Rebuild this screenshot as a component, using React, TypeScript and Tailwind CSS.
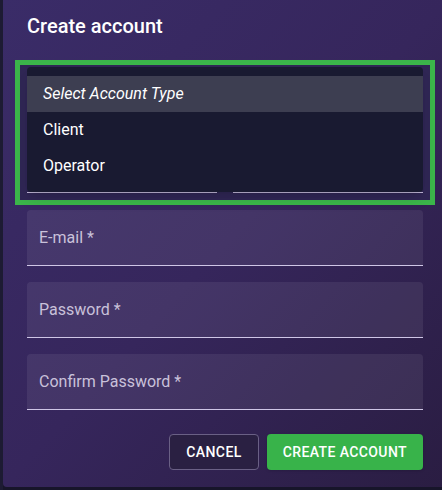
import { ReactNode } from "react";

function Field({ label }: { label: string }) {
  return (
    <div className="h-14 rounded-t bg-white/[0.07] border-b border-[#cfc6e6] flex items-center px-3">
      <span className="text-base text-[#c9c1da]">{label}</span>
    </div>
  );
}

function MenuItem({ children, active, italic }: { children: ReactNode; active?: boolean; italic?: boolean }) {
  return (
    <div
      className={
        "h-9 flex items-center px-4 text-base text-white " +
        (active ? "bg-[#3d3e51] " : "") +
        (italic ? "italic text-[#ececf2]" : "")
      }
    >
      {children}
    </div>
  );
}

export default function App() {
  return (
    <div
      className="w-[442px] h-[490px] overflow-hidden flex bg-[#17152a]"
      style={{ fontFamily: "Roboto, 'Liberation Sans', sans-serif" }}
    >
      <div className="w-[3px] shrink-0 h-full bg-[#1d1b33]" />
      <div className="w-[444px] shrink-0 h-[487px] rounded-bl bg-gradient-to-br from-[#3a2c68] via-[#36265c] to-[#2a1d42] px-6 pt-[10px] flex flex-col">
        <h2 className="text-xl font-medium leading-8 text-white">Create account</h2>

        <div className="mt-[18px] -mx-3 border-[5px] border-[#3bb54a] bg-[#2f2654] px-[7px] pb-[7px]">
          <div className="relative h-[128px]">
            <div className="absolute inset-x-0 bottom-0 grid grid-cols-2 gap-4">
              <div className="h-10 border-b border-[#bdb4d4]" />
              <div className="h-10 border-b border-[#bdb4d4]" />
            </div>
            <div className="absolute inset-x-0 top-[2px] h-[125px] rounded bg-[#191a31] pt-[9px] shadow-lg">
              <MenuItem active italic>
                Select Account Type
              </MenuItem>
              <MenuItem>Client</MenuItem>
              <MenuItem>Operator</MenuItem>
            </div>
          </div>
        </div>

        <div className="mt-[5px] flex flex-col gap-4 w-[396px]">
          <Field label="E-mail *" />
          <Field label="Password *" />
          <Field label="Confirm Password *" />
        </div>

        <div className="mt-6 w-[396px] flex justify-end gap-2">
          <button className="h-9 px-4 rounded border border-[#6a6085] bg-[#2a2042] text-sm font-medium tracking-[0.4px] text-white uppercase">
            Cancel
          </button>
          <button className="h-9 px-4 rounded bg-[#38b34a] text-sm font-medium tracking-[0.4px] text-white uppercase shadow">
            Create account
          </button>
        </div>
      </div>
    </div>
  );
}
